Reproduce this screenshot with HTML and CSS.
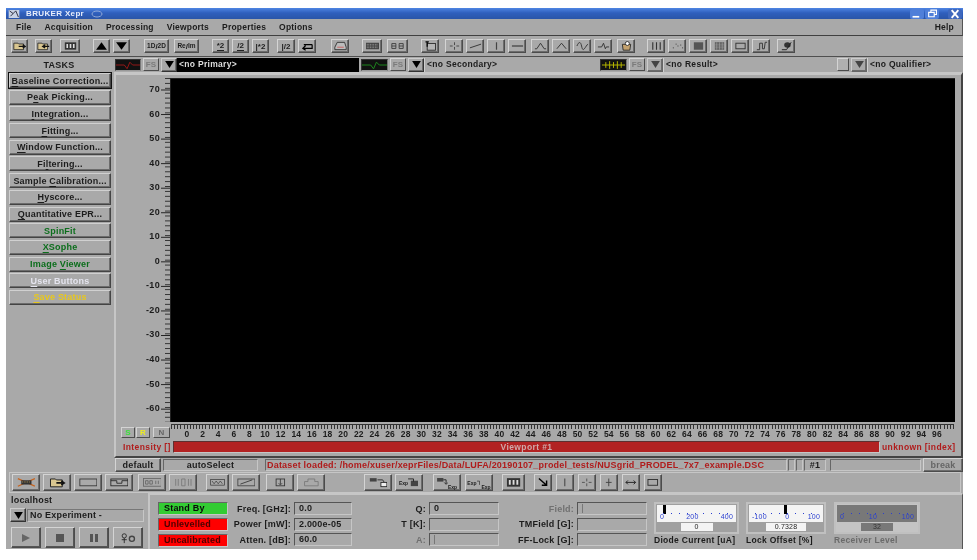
FILE: index.html
```html
<!DOCTYPE html>
<html lang="en">
<head>
<meta charset="utf-8">
<title>BRUKER Xepr</title>
<link rel="stylesheet" href="styles.css">
</head>
<body>
<div class="window">
  <header class="titlebar">
    <svg class="tlogo" viewBox="0 0 12 9"><rect width="12" height="9" fill="#c9d3e4"/><path d="M1 1l4 3 3-3 3 7M2 7l3-3" stroke="#223" fill="none"/></svg>
    <span class="ttext">BRUKER Xepr</span>
    <svg class="tswirl" viewBox="0 0 12 8"><ellipse cx="6" cy="4" rx="5" ry="3" fill="none" stroke="#8fa8d8"/></svg>
    <span class="tspace"></span>
    <span class="wbtn wmin"><svg viewBox="0 0 12 9"><path d="M2 7h6" stroke="#fff" stroke-width="1.5"/></svg></span>
    <span class="wbtn wres"><svg viewBox="0 0 12 9"><path d="M3 3h5v4H3zM5 3V1h5v4H8" stroke="#fff" fill="none"/></svg></span>
    <span class="wbtn wclose"><svg viewBox="0 0 12 9"><path d="M3 1l6 7M9 1L3 8" stroke="#fff" stroke-width="1.7"/></svg></span>
  </header>
  <nav class="menubar">
    <span>File</span><span>Acquisition</span><span>Processing</span><span>Viewports</span><span>Properties</span><span>Options</span><span class="help">Help</span>
  </nav>
  <div class="toolbar">
    <button class="b w17"><svg viewBox="0 0 16 11"><path d="M1 2h5l1 1h6v7H1z" fill="#d9c690" stroke="#222"/><path d="M7 6h8M12 4l3 2-3 2" stroke="#111" stroke-width="1.6" fill="none"/></svg></button>
    <button class="b w17 m7"><svg viewBox="0 0 16 11"><path d="M1 2h5l1 1h6v7H1z" fill="#d9c690" stroke="#222"/><path d="M15 6H7M10 4L7 6l3 2" stroke="#111" stroke-width="1.6" fill="none"/></svg></button>
    <button class="b w20 m8"><svg viewBox="0 0 16 11"><rect x="1" y="1" width="14" height="9" fill="#333"/><path d="M3 3h2v5H3zM7 3h2v5H7zM11 3h2v5h-2z" fill="#ddd"/></svg></button>
    <button class="b w17 m13"><svg viewBox="0 0 12 9"><path d="M6 1l5 7H1z" fill="#000"/></svg></button>
    <button class="b w17"><svg viewBox="0 0 12 9"><path d="M6 8L1 1h10z" fill="#000"/></svg></button>
    <button class="b w25 m14 t"><sup>1D</sup>/<sub>2D</sub></button>
    <button class="b w25 m5 t"><sup>Re</sup>/<sub>Im</sub></button>
    <button class="b w17 m13 t"><span class="ul">*2</span></button>
    <button class="b w17 t"><span class="ul">/2</span></button>
    <button class="b w17 t">|*2</button>
    <button class="b w18 m8 t">|/2</button>
    <button class="b w18 t"><svg viewBox="0 0 14 9"><path d="M12 3v4H2M5 4L2 7l3 2M12 3H3" stroke="#000" fill="none" stroke-width="1.3"/></svg></button>
    <button class="b w18 m15"><svg viewBox="0 0 16 11"><path d="M4 1h9l2 6v3H1V7z" fill="#bbb" stroke="#222"/><path d="M4 7h8" stroke="#c55"/></svg></button>
    <button class="b w20 m13"><svg viewBox="0 0 16 8"><rect width="16" height="8" fill="#444"/><path d="M1 2h14M1 4h14M1 6h14" stroke="#aaa" stroke-dasharray="1 1"/></svg></button>
    <button class="b w21 m5"><svg viewBox="0 0 16 8"><path d="M1 1h5v6H1zM10 1h5v6h-5zM1 4h5M10 4h5" fill="none" stroke="#333"/></svg></button>
    <button class="b w18 m13"><svg viewBox="0 0 14 12"><rect x="3" y="3" width="10" height="8" fill="#b5b5b5" stroke="#222"/><path d="M1 1h4M3 1v6" stroke="#000" stroke-width="1.4"/></svg></button>
    <button class="b w18 m6"><svg viewBox="0 0 14 10"><path d="M7 1v3M7 6v3M2 5h3M9 5h3" stroke="#444"/></svg></button>
    <button class="b w18"><svg viewBox="0 0 14 10"><path d="M1 7l12-4" stroke="#333"/></svg></button>
    <button class="b w18"><svg viewBox="0 0 14 10"><path d="M7 1v8" stroke="#444" stroke-width="1.3"/></svg></button>
    <button class="b w18"><svg viewBox="0 0 14 10"><path d="M1 5h12" stroke="#333" stroke-width="1.2"/></svg></button>
    <button class="b w18 m5"><svg viewBox="0 0 14 10"><path d="M1 8h2l4-6 4 6h2" stroke="#333" fill="none"/></svg></button>
    <button class="b w18"><svg viewBox="0 0 14 10"><path d="M2 8l5-6 5 6" stroke="#333" fill="none"/></svg></button>
    <button class="b w18"><svg viewBox="0 0 14 10"><path d="M1 5c2-5 4-5 5 0s2 4 3 3 3-5 4-5" stroke="#333" fill="none"/></svg></button>
    <button class="b w18"><svg viewBox="0 0 14 10"><path d="M1 6h4l2-4 2 6 1-2h3" stroke="#333" fill="none"/></svg></button>
    <button class="b w18 m5"><svg viewBox="0 0 14 12"><path d="M2 4h10l-1 7H3z" fill="#c4a26e" stroke="#222"/><circle cx="8" cy="3" r="2.4" fill="#fff" stroke="#222"/></svg></button>
    <button class="b w18 m12"><svg viewBox="0 0 14 10"><path d="M3 1v8M7 1v8M11 1v8" stroke="#333" stroke-width="1.2"/></svg></button>
    <button class="b w18"><svg viewBox="0 0 14 10"><path d="M2 7h1M5 3h1M7 5h1M10 4h1M12 7h1" stroke="#333"/></svg></button>
    <button class="b w18"><svg viewBox="0 0 14 10"><rect x="2" y="1" width="10" height="8" fill="#555"/></svg></button>
    <button class="b w18"><svg viewBox="0 0 14 10"><path d="M2 1h10v8H2z" fill="#555"/><path d="M4 1v8M7 1v8M10 1v8M2 3h10M2 5h10M2 7h10" stroke="#aaa" stroke-width=".6"/></svg></button>
    <button class="b w18"><svg viewBox="0 0 14 10"><rect x="2" y="2" width="10" height="6" fill="none" stroke="#333"/></svg></button>
    <button class="b w18"><svg viewBox="0 0 14 10"><path d="M2 9h3V2h3v6h2l1-7h2" fill="none" stroke="#333"/></svg></button>
    <button class="b w18 m7"><svg viewBox="0 0 14 10"><ellipse cx="8" cy="4" rx="3.5" ry="3" fill="#333"/><path d="M2 9h5l5-8" stroke="#222" fill="none"/></svg></button>
  </div>
  <div class="main">
    <aside class="tasks">
      <div class="taskhead">TASKS</div>
      <div class="tasklist">
        <button class="task first"><u>B</u>aseline Correction...</button>
        <button class="task">P<u>e</u>ak Picking...</button>
        <button class="task"><u>I</u>ntegration...</button>
        <button class="task"><u>F</u>itting...</button>
        <button class="task"><u>W</u>indow Function...</button>
        <button class="task">Fi<u>l</u>tering...</button>
        <button class="task">Sample <u>C</u>alibration...</button>
        <button class="task"><u>H</u>yscore...</button>
        <button class="task"><u>Q</u>uantitative EPR...</button>
        <button class="task green">SpinFit</button>
        <button class="task green"><u>X</u>Sophe</button>
        <button class="task green">Image <u>V</u>iewer</button>
        <button class="task white"><u>U</u>ser Buttons</button>
        <button class="task yellow"><u>S</u>ave Status</button>
      </div>
    </aside>
    <section class="work">
      <div class="selectors">
        <span class="mini w25x"><svg viewBox="0 0 26 10"><path d="M0 5h9l3 4 3-7 3 3h8" stroke="#a01818" fill="none"/></svg></span>
        <button class="b fs">FS</button>
        <button class="b arrow"><svg viewBox="0 0 10 8"><path d="M5 8L0 0h10z" fill="#000"/></svg></button>
        <span class="sel black">&lt;no Primary&gt;</span>
        <span class="mini w27x"><svg viewBox="0 0 26 10"><path d="M0 5h9l3 4 3-7 3 3h8" stroke="#1d8a1d" fill="none"/></svg></span>
        <button class="b fs">FS</button>
        <button class="b arrow"><svg viewBox="0 0 10 8"><path d="M5 8L0 0h10z" fill="#000"/></svg></button>
        <span class="sel sec">&lt;no Secondary&gt;</span>
        <span class="mini w27x"><svg viewBox="0 0 26 10"><path d="M1 5h24M5 2v6M9 1v8M13 2v6M17 1v8M21 2v6" stroke="#b8b800"/></svg></span>
        <button class="b fs">FS</button>
        <button class="b arrow dim"><svg viewBox="0 0 10 8"><path d="M5 8L0 0h10z" fill="#444"/></svg></button>
        <span class="sel res">&lt;no Result&gt;</span>
        <button class="b blank"></button>
        <button class="b arrow dim"><svg viewBox="0 0 10 8"><path d="M5 8L0 0h10z" fill="#444"/></svg></button>
        <span class="sel qual">&lt;no Qualifier&gt;</span>
      </div>
      <div class="plotframe">
        <div class="plotgrid">
          <div class="yaxis">
            <div class="ylabels">
              <span>70</span><span>60</span><span>50</span><span>40</span><span>30</span><span>20</span><span>10</span><span>0</span><span>-10</span><span>-20</span><span>-30</span><span>-40</span><span>-50</span><span>-60</span>
            </div>
            <svg class="yticks" width="10" height="344">
              <defs>
                <pattern id="ym" width="10" height="4.91" patternUnits="userSpaceOnUse"><path d="M4 .5h6" stroke="#333"/></pattern>
                <pattern id="yM" width="10" height="24.55" patternUnits="userSpaceOnUse" y="11.5"><path d="M0 .5h10" stroke="#222"/></pattern>
              </defs>
              <rect width="10" height="344" fill="url(#ym)"/>
              <rect width="10" height="344" fill="url(#yM)"/>
              <path d="M9.5 0v344" stroke="#222"/>
            </svg>
          </div>
          <div class="canvas"></div>
          <div class="corner">
            <button class="b srn sg">S</button><button class="b srn sy">R</button><button class="b srn sn">N</button>
          </div>
          <div class="xaxis">
            <div class="xticks"></div>
            <div class="xlabels">
              <span>0</span><span>2</span><span>4</span><span>6</span><span>8</span><span>10</span><span>12</span><span>14</span><span>16</span><span>18</span><span>20</span><span>22</span><span>24</span><span>26</span><span>28</span><span>30</span><span>32</span><span>34</span><span>36</span><span>38</span><span>40</span><span>42</span><span>44</span><span>46</span><span>48</span><span>50</span><span>52</span><span>54</span><span>56</span><span>58</span><span>60</span><span>62</span><span>64</span><span>66</span><span>68</span><span>70</span><span>72</span><span>74</span><span>76</span><span>78</span><span>80</span><span>82</span><span>84</span><span>86</span><span>88</span><span>90</span><span>92</span><span>94</span><span>96</span>
            </div>
          </div>
        </div>
        <div class="vprow">
          <span class="vpy">Intensity []</span>
          <span class="vpbar">Viewport #1</span>
          <span class="vpx">unknown [index]</span>
        </div>
      </div>
      <div class="statusrow">
        <button class="b default">default</button>
        <span class="cell auto">autoSelect</span>
        <span class="cell ds">Dataset loaded: /home/xuser/xeprFiles/Data/LUFA/20190107_prodel_tests/NUSgrid_PRODEL_7x7_example.DSC</span>
        <span class="cell tiny"></span>
        <span class="cell tiny"></span>
        <span class="cell num">#1</span>
        <span class="cell fill"></span>
        <button class="b brk">break</button>
      </div>
    </section>
  </div>
  <div class="toolrow">
    <button class="b w28 first"><svg viewBox="0 0 22 11"><path d="M1 1l20 9M21 1L1 10" stroke="#c8641e" stroke-width="1.5"/><rect x="5" y="3" width="12" height="5" fill="#333"/><path d="M6 5h10" stroke="#c9a55a" stroke-dasharray="1 1"/></svg></button>
    <button class="b w28"><svg viewBox="0 0 16 11"><path d="M1 2h5l1 1h6v7H1z" fill="#d9c690" stroke="#222"/><path d="M7 6h8M12 4l3 2-3 2" stroke="#111" stroke-width="1.6" fill="none"/></svg></button>
    <button class="b w28"><svg viewBox="0 0 22 10"><rect x="1" y="1" width="20" height="8" fill="none" stroke="#333"/></svg></button>
    <button class="b w28"><svg viewBox="0 0 22 10"><rect x="1" y="1" width="20" height="8" fill="none" stroke="#222"/><path d="M1 3h7v3h6V3h7" fill="none" stroke="#222"/></svg></button>
    <button class="b w28 m5 off"><svg viewBox="0 0 22 10"><rect x=".5" y=".5" width="21" height="9" fill="none" stroke="#666"/><path d="M3 3h3v4H3zM8 3h3v4H8zM15 3v4M18 3v4" stroke="#666" fill="none"/></svg></button>
    <button class="b w28 off"><svg viewBox="0 0 22 10"><path d="M2 1v8M5 1v8M9 1h4v8H9zM17 1v8M20 1v8" stroke="#777" fill="none"/></svg></button>
    <button class="b w23 m9"><svg viewBox="0 0 22 10"><rect x="1" y="1" width="20" height="8" fill="none" stroke="#333"/><path d="M3 3l3 4 3-4 3 4 3-4 3 4" fill="none" stroke="#333"/></svg></button>
    <button class="b w28"><svg viewBox="0 0 22 10"><rect x="1" y="1" width="20" height="8" fill="none" stroke="#444"/><path d="M4 7l14-5" stroke="#333"/></svg></button>
    <button class="b w28 m6"><svg viewBox="0 0 22 10"><rect x="6" y="1" width="10" height="8" fill="none" stroke="#333"/><path d="M11 1v6M9 6l2 2 2-2" stroke="#333" fill="none"/></svg></button>
    <button class="b w28 off"><svg viewBox="0 0 22 10"><path d="M3 9V4h4V1h8v3h4v5z" stroke="#777" fill="none"/></svg></button>
    <button class="b w28 m39"><svg viewBox="0 0 22 12"><path d="M1 1h8v4H1z" fill="#444"/><path d="M10 3h6l2 3" stroke="#222" fill="none"/><rect x="14" y="6" width="7" height="5" fill="#eee" stroke="#222"/></svg></button>
    <button class="b w28"><span class="exp">Exp</span><svg viewBox="0 0 12 10" class="half"><rect x="3" y="3" width="8" height="6" fill="#444"/><path d="M0 1h6v3" stroke="#222" fill="none"/></svg></button>
    <button class="b w28 m10"><svg viewBox="0 0 12 10" class="half"><rect x="0" y="0" width="7" height="4" fill="#444"/><path d="M7 2h3v4M8 5l2 2 2-2" stroke="#222" fill="none"/></svg><span class="exp low">Exp</span></button>
    <button class="b w28 m4"><span class="exp">Exp</span><svg viewBox="0 0 8 10" class="tiny-ic"><path d="M0 2h4v6" stroke="#222" fill="none"/></svg><span class="exp low">Exp</span></button>
    <button class="b w23 m9"><svg viewBox="0 0 16 11"><rect x="1" y="1" width="14" height="9" fill="#333"/><path d="M3 3h2v5H3zM7 3h2v5H7zM11 3h2v5h-2z" fill="#ddd"/></svg></button>
    <button class="b w18 m9"><svg viewBox="0 0 12 10"><path d="M2 1l8 7M10 3v5H5" stroke="#000" stroke-width="1.5" fill="none"/></svg></button>
    <button class="b w18 m4"><svg viewBox="0 0 12 10"><path d="M6 1v8" stroke="#555" stroke-width="1.3"/></svg></button>
    <button class="b w18 m4"><svg viewBox="0 0 12 10"><path d="M6 1v3M6 6v3M1 5h3M8 5h3" stroke="#555"/></svg></button>
    <button class="b w18 m4"><svg viewBox="0 0 12 10"><path d="M6 1v8M3 5h6" stroke="#444"/></svg></button>
    <button class="b w18 m4"><svg viewBox="0 0 12 10"><path d="M1 5h10M3 3L1 5l2 2M9 3l2 2-2 2" stroke="#222" fill="none"/></svg></button>
    <button class="b w18 m4"><svg viewBox="0 0 12 10"><rect x="1" y="2" width="10" height="6" fill="none" stroke="#333"/></svg></button>
  </div>
  <footer class="bottom">
    <div class="host">
      <div class="hostname">localhost</div>
      <div class="exprow">
        <button class="b arrow big"><svg viewBox="0 0 10 8"><path d="M5 8L0 0h10z" fill="#000"/></svg></button>
        <span class="cell expfield">No Experiment -</span>
      </div>
      <div class="transport">
        <button class="b tb"><svg class="tsmall" viewBox="0 0 10 8"><path d="M1 0l8 4-8 4z" fill="#666"/></svg></button>
        <button class="b tb"><svg class="tsmall" viewBox="0 0 10 8"><rect x="1" width="8" height="8" fill="#555"/></svg></button>
        <button class="b tb"><svg class="tsmall" viewBox="0 0 10 8"><path d="M1 0h3v8H1zM6 0h3v8H6z" fill="#555"/></svg></button>
        <button class="b tb"><svg viewBox="0 0 20 12"><circle cx="5" cy="3.5" r="2.5" fill="none" stroke="#222"/><path d="M5 6v6M2 8h6" stroke="#222"/><circle cx="14" cy="7" r="3" fill="none" stroke="#444" stroke-width="1.6"/></svg></button>
      </div>
    </div>
    <div class="readouts">
      <div class="pills">
        <span class="pill gr">Stand By</span>
        <span class="pill rd">Unlevelled</span>
        <span class="pill rd">Uncalibrated</span>
      </div>
      <div class="fields c1">
        <label>Freq. [GHz]:</label><span class="f">0.0</span>
        <label>Power [mW]:</label><span class="f">2.000e-05</span>
        <label>Atten. [dB]:</label><span class="f">60.0</span>
      </div>
      <div class="fields c2">
        <label>Q:</label><span class="f">0</span>
        <label>T [K]:</label><span class="f"></span>
        <label class="dis">A:</label><span class="f"><i class="cur"></i></span>
      </div>
      <div class="fields c3">
        <label class="dis">Field:</label><span class="f"><i class="cur"></i></span>
        <label>TMField [G]:</label><span class="f"></span>
        <label>FF-Lock [G]:</label><span class="f"></span>
      </div>
      <div class="meter m1">
        <div class="mbox">
          <div class="dial"><i class="needle n0"></i><span class="scale"><b>0</b><b>200</b><b>400</b></span></div>
          <div class="mval">0</div>
        </div>
        <div class="mlab">Diode Current [uA]</div>
      </div>
      <div class="meter m2">
        <div class="mbox">
          <div class="dial"><i class="needle n1"></i><span class="scale"><b>-100</b><b>0</b><b>100</b></span></div>
          <div class="mval">0.7328</div>
        </div>
        <div class="mlab">Lock Offset [%]</div>
      </div>
      <div class="meter m3m dimmed">
        <div class="mbox">
          <div class="dial"><span class="scale"><b>0</b><b>10</b><b>100</b></span></div>
          <div class="mval">32</div>
        </div>
        <div class="mlab">Receiver Level</div>
      </div>
    </div>
  </footer>
</div>
</body>
</html>
```
FILE: styles.css
```css
* { box-sizing: border-box; }
html, body { height: 100%; }
body {
  margin: 0;
  padding: 8px 14px 11px 6px;
  background: #fff;
  overflow: hidden;
  font: bold 9px "Liberation Sans", Arial, sans-serif;
  letter-spacing: .2px;
  color: #1c1c1c;
}
button { font: inherit; letter-spacing: inherit; color: inherit; padding: 0; margin: 0; }
.window {
  width: 957px;
  height: 541px;
  background: #a9a9a9;
  display: flex;
  flex-direction: column;
  filter: blur(.4px);
}
.titlebar {
  height: 11px;
  display: flex;
  align-items: center;
  background: linear-gradient(#4f85e3, #2f5fbd 45%, #2a55a8);
  color: #e8eefc;
  padding: 0 1px;
}
.tlogo { width: 12px; height: 8px; margin-left: 1px; }
.ttext { margin-left: 6px; font-size: 8px; letter-spacing: .35px; }
.tswirl { width: 12px; height: 8px; margin-left: 7px; }
.tspace { flex: 1; }
.wbtn { width: 14px; height: 10px; margin-left: 1px; border-radius: 2px; background: #4f7fd9; display: flex; }
.wbtn svg { width: 100%; height: 100%; }
.wclose { background: #3f68bd; margin-left: 9px; }
.menubar {
  height: 17px;
  display: flex;
  align-items: center;
  padding: 0 8px 0 10px;
  gap: 13px;
  border-bottom: 1px solid #404040;
  border-right: 1px solid #555;
  font-size: 8.5px;
}
.help { margin-left: auto; }
.toolbar {
  height: 21px;
  display: flex;
  align-items: center;
  padding: 0 0 0 2px;
  border-bottom: 1px solid #4f4f4f;
}
.b {
  height: 16px;
  flex: none;
  display: inline-flex;
  align-items: center;
  justify-content: center;
  background: #a9a9a9;
  border: 1px solid;
  border-color: #d4d4d4 #4c4c4c #4c4c4c #d4d4d4;
  box-shadow: inset -1px -1px 0 #6c6c6c;
  margin-left: 3px;
}
.b svg { width: 72%; height: 72%; }
.toolbar .b { height: 14px; }
.toolbar .b svg { width: 13px; height: 10px; }
.w17 { width: 17px; } .w18 { width: 18px; } .w20 { width: 20px; } .w21 { width: 21px; }
.w23 { width: 23px; } .w25 { width: 25px; } .w28 { width: 28px; }
.m4 { margin-left: 4px; } .m5 { margin-left: 5px; } .m6 { margin-left: 6px; }
.m7 { margin-left: 7px; } .m8 { margin-left: 8px; } .m9 { margin-left: 9px; } .m10 { margin-left: 10px; }
.m12 { margin-left: 12px; } .m13 { margin-left: 13px; } .m14 { margin-left: 14px; } .m15 { margin-left: 15px; }
.m39 { margin-left: 39px; }
.t { font-size: 8px; letter-spacing: 0; }
.t sup, .t sub { font-size: 6.5px; line-height: 0; }
.ul { border-bottom: 1px solid #222; line-height: 9px; }
.main { height: 415px; display: flex; }
.tasks { width: 108px; flex: none; padding-left: 3px; }
.taskhead { height: 16px; line-height: 16px; text-align: center; padding-right: 5px; }
.tasklist { display: flex; flex-direction: column; gap: 1.7px; }
.task {
  width: 102px; height: 15px;
  background: #a9a9a9;
  border: 1px solid;
  border-color: #d0d0d0 #444 #444 #d0d0d0;
  box-shadow: inset -1px -1px 0 #6c6c6c;
  white-space: nowrap;
  text-align: center;
  line-height: 12px;
}
.task u { text-underline-offset: 2px; }
.task.first { outline: 1px solid #111; }
.green { color: #0c6e1c; }
.white { color: #e4e4ee; }
.yellow { color: #e8c81c; }
.work { flex: 1; display: flex; flex-direction: column; min-width: 0; }
.selectors { height: 15px; display: flex; align-items: center; padding-left: 1px; }
.mini { height: 12px; background: #111; display: flex; flex: none; border: 1px solid; border-color: #333 #777 #999 #333; }
.mini svg { width: 100%; height: 100%; }
.w25x { width: 26px; }
.w27x { width: 27px; margin-left: 2px; }
.fs { width: 16px; height: 13px; color: #7b7b7b; font-size: 8px; margin-left: 2px; box-shadow: none; }
.arrow { width: 16px; height: 14px; margin-left: 2px; border-color: #ccc #333 #333 #ccc; }
.arrow svg { width: 9px; height: 7px; }
.arrow.dim { border-color: #ccc #666 #666 #ccc; }
.blank { width: 12px; height: 13px; margin-left: 2px; background: #b0b0b0; box-shadow: none; }
.sel { height: 14px; line-height: 13px; padding-left: 2px; font-size: 8.5px; flex: none; white-space: nowrap; letter-spacing: .3px; }
.sel.black { width: 182px; background: #000; color: #ddd; }
.sec { width: 174px; border-left: 1px solid #d0d0d0; }
.res { width: 172px; border-left: 1px solid #d0d0d0; }
.qual { width: 95px; border-left: 1px solid #d0d0d0; }
.plotframe {
  height: 386px;
  border-top: 3px solid #c6c6c6;
  border-left: 2px solid #c6c6c6;
  border-right: 2px solid #444;
  border-bottom: 2px solid #444;
  display: flex;
  flex-direction: column;
  padding-right: 5px;
}
.plotgrid {
  display: grid;
  grid-template-columns: 55px 784px;
  grid-template-rows: 344px 19px;
  margin-top: 3px;
}
.yaxis { display: flex; justify-content: flex-end; }
.ylabels { display: flex; flex-direction: column; align-items: flex-end; margin-top: -1px; padding-right: 1px; font-size: 9px; letter-spacing: .35px; }
.ylabels span { height: 24.55px; line-height: 24.55px; }
.yticks { flex: none; }
.canvas { background: #000; border-top: 1px solid #222; }
.corner { display: flex; align-items: flex-start; padding: 5px 0 0 5px; }
.srn { width: 14px; height: 11px; margin-left: 1px; font-size: 8px; box-shadow: none; }
.sn { width: 17px; margin-left: 3px; color: #666; }
.sg { color: #3ce03c; margin-left: 0; }
.sy { color: #ecec20; }
.xaxis { min-width: 0; }
.xticks {
  width: 783px; height: 5px; margin-top: 2px;
  border-top: 1px solid #333;
  background: repeating-linear-gradient(90deg, #333 0 1px, transparent 1px 3.128px);
}
.xlabels { display: flex; margin-left: 8.2px; }
.xlabels span { flex: 0 0 15.64px; text-align: center; letter-spacing: .25px; font-size: 8.5px; line-height: 11px; }
.vprow { height: 13px; display: flex; align-items: center; font-size: 8.5px; color: #b01c1c; margin-top: -1px; letter-spacing: .4px; }
.vpy { width: 57px; padding-left: 7px; flex: none; white-space: nowrap; }
.vpbar {
  width: 707px; height: 12px; flex: none;
  background: #b22222; color: #cfa9a9;
  border: 1px solid; border-color: #5c3030 #c6c6c6 #c6c6c6 #5c3030;
  text-align: center; line-height: 10px;
}
.vpx { margin-left: 2px; white-space: nowrap; }
.statusrow { height: 14px; display: flex; align-items: center; padding-left: 1px; }
.default { width: 46px; height: 14px; margin-left: 0; }
.cell {
  height: 12px; flex: none; margin-left: 2px;
  border: 1px solid; border-color: #666 #c6c6c6 #c6c6c6 #666;
  line-height: 10px; white-space: nowrap; overflow: hidden;
}
.auto { width: 95px; text-align: center; }
.ds { width: 522px; margin-left: 7px; color: #b01c1c; padding-left: 1px; letter-spacing: .2px; }
.tiny { width: 7px; margin-left: 1px; }
.num { width: 22px; margin-left: 1px; text-align: center; }
.fill { width: 91px; margin-left: 4px; }
.brk { width: 40px; height: 14px; margin-left: 2px; color: #666; }
.toolrow {
  height: 21px;
  margin: 0 2px 0 3px;
  display: flex;
  align-items: center;
  border: 1px solid #c6c6c6;
}
.toolrow .b { height: 17px; }
.toolrow .first { margin-left: 2px; }
.half { width: 11px !important; height: 9px !important; }
.tiny-ic { width: 5px !important; height: 8px !important; }
.exp { font-size: 5px; letter-spacing: 0; }
.exp.low { align-self: flex-end; }
.bottom { height: 56px; display: flex; }
.host { width: 142px; flex: none; padding: 1px 0 0 4px; }
.hostname { height: 13px; line-height: 12px; padding-left: 1px; }
.exprow { display: flex; height: 16px; align-items: center; }
.big { height: 14px; width: 16px; margin-left: 0; }
.expfield { width: 117px; height: 13px; margin-left: 1px; padding-left: 2px; border-color: #777 #c6c6c6 #c6c6c6 #777; }
.transport { display: flex; gap: 4px; margin: 4px 0 0 1px; }
.tb { width: 30px; height: 21px; margin-left: 0; box-shadow: inset -1px -1px 0 #555; }
.tb svg { width: 17px; height: 12px; }
.tb .tsmall { width: 10px; height: 8px; }
.readouts {
  flex: 1;
  display: flex;
  border-top: 2px solid #c6c6c6;
  border-left: 2px solid #c6c6c6;
  border-right: 1px solid #555;
  padding: 7px 0 0 8px;
  min-width: 0;
}
.pills { width: 70px; flex: none; display: flex; flex-direction: column; gap: 3px; }
.pill { height: 13px; padding-left: 5px; line-height: 11px; color: #0a0a0a; border: 1px solid; border-color: #666 #c6c6c6 #c6c6c6 #666; }
.gr { background: #33cc33; }
.rd { background: #ff0000; color: #4a0000; }
.fields { display: grid; grid-auto-rows: 13px; row-gap: 2.5px; column-gap: 3px; align-items: center; flex: none; }
.fields label { text-align: right; white-space: nowrap; line-height: 12px; }
.fields .dis { color: #707070; }
.f {
  height: 13px; padding-left: 4px; line-height: 11px;
  border: 1px solid; border-color: #555 #c6c6c6 #c6c6c6 #555;
}
.c1 { grid-template-columns: 63px 58px; }
.c2 { grid-template-columns: 74px 70px; }
.c3 { grid-template-columns: 75px 70px; }
.cur { display: inline-block; width: 1px; height: 9px; background: #777; margin-top: 1px; }
.meter { flex: none; width: 85px; }
.m1 { margin-left: 7px; }
.m2 { margin-left: 7px; width: 80px; }
.m3m { margin-left: 8px; width: 86px; }
.mbox { height: 32px; border: 2px solid #c0c0c0; background: #a0a0a0; padding: 1px; display: flex; flex-direction: column; align-items: center; }
.dial {
  position: relative; width: 100%; height: 18px; background: #f4f4f4;
}
.dial::after {
  content: ""; position: absolute; left: 6px; right: 6px; top: 8px; height: 1px;
  background: repeating-linear-gradient(90deg, #2a3fd0 0 1px, transparent 1px 8px);
}
.needle { position: absolute; top: 0; width: 3px; height: 9px; background: #000; }
.n0 { left: 6px; }
.n1 { left: 35px; }
.scale { position: absolute; left: 3px; right: 3px; bottom: 1px; display: flex; justify-content: space-between; color: #2a3fd0; font-size: 7px; letter-spacing: .2px; line-height: 8px; }
.scale b { font-weight: normal; }
.mval { width: 32px; height: 8px; margin-top: 1px; background: #f4f4f4; text-align: center; font-size: 7px; line-height: 8px; font-weight: normal; }
.m2 .mval { width: 40px; }
.mlab { margin-top: 1px; white-space: nowrap; font-size: 8.5px; line-height: 11px; letter-spacing: .3px; }
.dimmed .mbox { background: #c4c4c4; }
.dimmed .dial { background: #787878; }
.dimmed .mval { background: #787878; color: #333; }
.dimmed .mlab { color: #6a6a6a; }
```
